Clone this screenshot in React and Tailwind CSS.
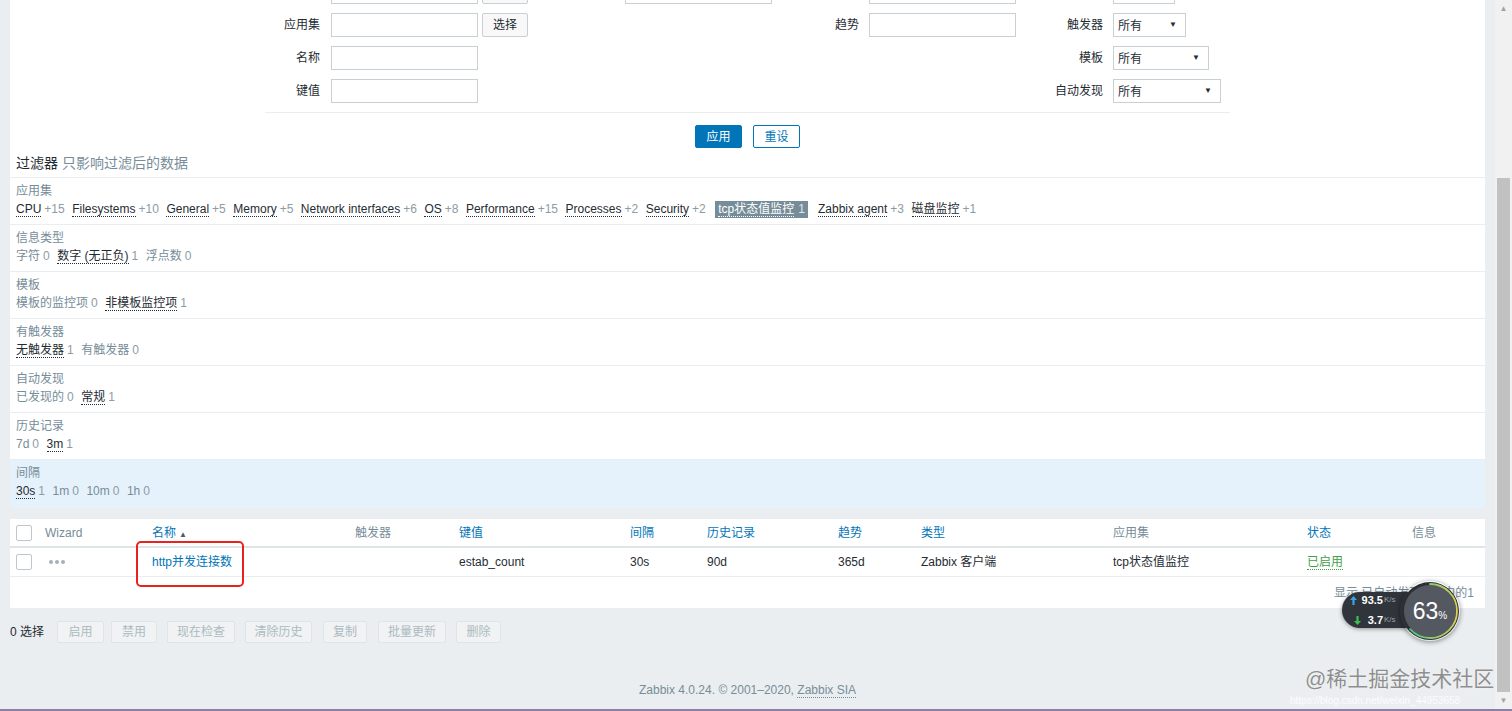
import React from "react";

const FONT = "font-['Liberation_Sans','Noto_Sans_CJK_SC',sans-serif]";

const Input = ({ w = "w-[147px]" }) => (
  <div className={"h-[24px] border border-[#c9cfd2] bg-white " + w} />
);

const Select = ({ w, empty }) => (
  <div className={"h-[24px] border border-[#c9cfd2] bg-white flex items-center justify-between pl-[4px] pr-[8px] " + w}>
    {!empty && <span className="pt-[2px]">所有</span>}
    {!empty && <span className="text-[8px]">▼</span>}
  </div>
);

const PickBtn = ({ empty }) => (
  <div className="h-[24px] w-[46px] border border-[#c9cfd2] rounded-[2px] bg-[#f8f8f8] flex items-center justify-center">{empty ? null : "选择"}</div>
);

// one filter form row, 4 label/field columns
const FormRow = ({ c1, f1, c2, f2, c3, f3, c4, f4 }) => (
  <div className="flex items-center h-[33px]">
    <div className="w-[55px] text-right">{c1}</div>
    <div className="w-[240px] pl-[11px] flex gap-[4px]">{f1}</div>
    <div className="w-[55px] text-right">{c2}</div>
    <div className="w-[185px] pl-[10px] flex">{f2}</div>
    <div className="w-[59px] text-right">{c3}</div>
    <div className="w-[191px] pl-[10px] flex">{f3}</div>
    <div className="w-[53px] text-right whitespace-nowrap">{c4}</div>
    <div className="w-[127px] pl-[10px] flex">{f4}</div>
  </div>
);

const Tag = ({ name, count, link, active }) => {
  if (active) {
    return (
      <span className="bg-[#768d99] text-white px-[3px] leading-[17px] mr-[10px] ml-[2px]">
        <span className="border-b border-dotted border-white">{name}</span>
        <span className="ml-[4px] text-[#dfe6ea]">{count}</span>
      </span>
    );
  }
  return (
    <span className="mr-[7.5px]">
      <span className={link ? "border-b border-dotted border-[#1f2c33] text-[#1f2c33]" : "text-[#768d99]"}>{name}</span>
      <span className="ml-[3px] text-[#8d9ca4]">{count}</span>
    </span>
  );
};

const subfilters = [
  {
    label: "应用集",
    tags: [
      ["CPU", "+15", 1], ["Filesystems", "+10", 1], ["General", "+5", 1], ["Memory", "+5", 1],
      ["Network interfaces", "+6", 1], ["OS", "+8", 1], ["Performance", "+15", 1], ["Processes", "+2", 1],
      ["Security", "+2", 1], ["tcp状态值监控", "1", 1, 1], ["Zabbix agent", "+3", 1], ["磁盘监控", "+1", 1],
    ],
  },
  { label: "信息类型", tags: [["字符", "0"], ["数字 (无正负)", "1", 1], ["浮点数", "0"]] },
  { label: "模板", tags: [["模板的监控项", "0"], ["非模板监控项", "1", 1]] },
  { label: "有触发器", tags: [["无触发器", "1", 1], ["有触发器", "0"]] },
  { label: "自动发现", tags: [["已发现的", "0"], ["常规", "1", 1]] },
  { label: "历史记录", tags: [["7d", "0"], ["3m", "1", 1]] },
  { label: "间隔", tags: [["30s", "1", 1], ["1m", "0"], ["10m", "0"], ["1h", "0"]], hl: true },
];

const COLS = "grid grid-cols-[35px_107px_203px_104px_171px_77px_131px_83px_192px_194px_105px_73px] items-center";

const Checkbox = () => <div className="w-[16px] h-[16px] border border-[#bfc7cc] rounded-[2px] bg-white" />;

const actions = [
  ["启用", "w-[47px] ml-[13px]"], ["禁用", "w-[46px] ml-[7px]"], ["现在检查", "w-[68px] ml-[10px]"],
  ["清除历史", "w-[67px] ml-[10px]"], ["复制", "w-[44px] ml-[11px]"], ["批量更新", "w-[68px] ml-[11px]"],
  ["删除", "w-[45px] ml-[10px]"],
];

const Arrow = ({ up, color }) => (
  <svg width="7" height="9" viewBox="0 0 7 9" className="shrink-0">
    {up ? (
      <path d="M3.5 0 L7 4 H4.6 V9 H2.4 V4 H0 Z" fill={color} />
    ) : (
      <path d="M3.5 9 L7 5 H4.6 V0 H2.4 V5 H0 Z" fill={color} />
    )}
  </svg>
);

const SpeedWidget = () => (
  <div className="absolute left-[1342px] top-[580px] w-[120px] h-[62px]">
    <div className="absolute left-0 top-[12px] w-[92px] h-[36px] rounded-full bg-[#30343b] shadow-[0_1px_4px_rgba(0,0,0,0.4)] flex flex-col justify-center gap-[6px] pl-[8px] text-white">
      <div className="flex items-center leading-[14px]">
        <Arrow up color="#3aa3e3" />
        <span className="w-[26px] text-right text-[11px] font-bold">93.5</span>
        <span className="text-[8px] text-[#9aa2aa] ml-[1px]">K/s</span>
      </div>
      <div className="flex items-center leading-[14px]">
        <span className="w-[4px]" />
        <Arrow color="#3bbf4f" />
        <span className="w-[22px] text-right text-[11px] font-bold">3.7</span>
        <span className="text-[8px] text-[#9aa2aa] ml-[1px]">K/s</span>
      </div>
    </div>
    <div className="absolute left-[58px] top-[1px] w-[60px] h-[60px] rounded-full shadow-[0_1px_5px_rgba(0,0,0,0.45)]">
      <svg width="60" height="60" viewBox="0 0 60 60" className="absolute inset-0">
        <defs>
          <linearGradient id="ring" x1="0" y1="0" x2="0" y2="1">
            <stop offset="0" stopColor="#3cbf8a" />
            <stop offset="1" stopColor="#d9d257" />
          </linearGradient>
        </defs>
        <circle cx="30" cy="30" r="29" fill="#2c3036" />
        <circle cx="30" cy="30" r="26" fill="#545961" />
        <circle cx="30" cy="30" r="27" fill="none" stroke="url(#ring)" strokeWidth="1.8" strokeDasharray={`${2 * Math.PI * 27 * 0.63} ${2 * Math.PI * 27}`} transform="rotate(-90 30 30)" strokeLinecap="round" />
      </svg>
      <div className="absolute inset-0 flex items-center justify-center text-white">
        <span className="text-[23px] leading-none font-light">63</span>
        <span className="text-[10px] mt-[8px]">%</span>
      </div>
    </div>
  </div>
);

export default function App() {
  return (
    <div className={FONT + " w-[1512px] h-[711px] overflow-hidden bg-[#ebeef0] text-[12px] text-[#1f2c33] flex flex-col relative"}>
      <div className="flex h-[709px]">
        <div className="w-[1495px] px-[10px] flex flex-col">
          {/* filter panel */}
          <div className="bg-white">
            <div className="ml-[255px] w-[965px] -mt-[25px] pb-[5px] border-b border-[#ebeef0]">
              <FormRow
                c1="" f1={<><Input /><PickBtn empty /></>}
                c2="" f2={<Input />}
                c3="" f3={<Input />}
                c4="" f4={<Select w="w-[62px]" empty />}
              />
              <FormRow
                c1="应用集" f1={<><Input /><PickBtn /></>}
                c2="" f2={null}
                c3="趋势" f3={<Input />}
                c4="触发器" f4={<Select w="w-[73px]" />}
              />
              <FormRow c1="名称" f1={<Input />} c4="模板" f4={<Select w="w-[96px]" />} />
              <FormRow c1="键值" f1={<Input />} c4="自动发现" f4={<Select w="w-[108px]" />} />
            </div>
            <div className="flex justify-center gap-[11px] mt-[12px]">
              <div className="h-[23px] w-[47px] rounded-[2px] bg-[#0275b8] border border-[#0275b8] text-white flex items-center justify-center">应用</div>
              <div className="h-[23px] w-[47px] rounded-[2px] bg-white border border-[#0275b8] text-[#0275b8] flex items-center justify-center">重设</div>
            </div>
            <div className="h-[29px] flex items-center pl-[6px] pt-[1px] text-[14px]">
              过滤器<span className="text-[#768d99] ml-[4px]">只影响过滤后的数据</span>
            </div>
            <div className="border-t border-[#ebeef0]">
              {subfilters.map((s) => (
                <div key={s.label} className={s.hl ? "bg-[#e6f2fb] px-[6px] pt-[6px] pb-[8px]" : "border-b border-[#ebeef0] px-[6px] pt-[6px] pb-[6px]"}>
                  <div className="leading-[14px] text-[#768d99]">{s.label}</div>
                  <div className="mt-[2px] h-[18px] flex items-center">
                    {s.tags.map(([n, c, l, a]) => (
                      <Tag key={n} name={n} count={c} link={l} active={a} />
                    ))}
                  </div>
                </div>
              ))}
            </div>
          </div>

          {/* item list */}
          <div className="bg-white mt-[11px] relative">
            <div className={COLS + " h-[29px] border-b-2 border-[#dfe4e7]"}>
              <div className="pl-[6px]"><Checkbox /></div>
              <div className="text-[#768d99]">Wizard</div>
              <div className="text-[#0275b8]">名称<span className="ml-[3px] text-[8px] text-[#4f5b62]">▲</span></div>
              <div className="text-[#768d99]">触发器</div>
              <div className="text-[#0275b8]">键值</div>
              <div className="text-[#0275b8]">间隔</div>
              <div className="text-[#0275b8]">历史记录</div>
              <div className="text-[#0275b8]">趋势</div>
              <div className="text-[#0275b8]">类型</div>
              <div className="text-[#768d99]">应用集</div>
              <div className="text-[#0275b8]">状态</div>
              <div className="text-[#768d99]">信息</div>
            </div>
            <div className={COLS + " h-[29px] border-b border-[#ebeef0]"}>
              <div className="pl-[6px]"><Checkbox /></div>
              <div className="flex gap-[2px] pl-[4px]">
                <span className="w-[4px] h-[4px] rounded-full bg-[#a5b1b8]" />
                <span className="w-[4px] h-[4px] rounded-full bg-[#a5b1b8]" />
                <span className="w-[4px] h-[4px] rounded-full bg-[#a5b1b8]" />
              </div>
              <div className="text-[#0275b8]">http并发连接数</div>
              <div />
              <div>estab_count</div>
              <div>30s</div>
              <div>90d</div>
              <div>365d</div>
              <div>Zabbix 客户端</div>
              <div>tcp状态值监控</div>
              <div><span className="text-[#429e47] border-b border-dotted border-[#429e47]">已启用</span></div>
              <div />
            </div>
            <div className="h-[31px] flex items-center justify-end pr-[11px] text-[#768d99]">显示 已自动发现的 1中的1</div>
            <div className="absolute left-[126px] top-[22px] w-[108px] h-[46px] border-2 border-[#e8231e] rounded-[5px]" />
          </div>

          {/* mass actions */}
          <div className="mt-[13px] h-[22px] flex items-center">
            <span>0 选择</span>
            {actions.map(([t, w]) => (
              <div key={t} className={"h-[22px] rounded-[2px] border border-[#dfe4e7] bg-[#f0f2f3] text-[#acbbc2] flex items-center justify-center " + w}>{t}</div>
            ))}
          </div>

          <div className="mt-[40px] text-center text-[#768d99] leading-[14px]">
            Zabbix 4.0.24. © 2001–2020, <span className="border-b border-dotted border-[#768d99]">Zabbix SIA</span>
          </div>
        </div>

        {/* scrollbar */}
        <div className="w-[17px] bg-[#f1f1f1] flex flex-col items-center">
          <div className="h-[17px] flex items-center justify-center text-[8px] text-[#a3a3a3]">▲</div>
          <div className="mt-[161px] w-[13px] h-[514px] bg-[#c1c1c1]" />
          <div className="h-[17px] flex items-center justify-center text-[8px] text-[#a3a3a3]">▼</div>
        </div>
      </div>
      <div className="h-[2px] bg-[#8c7fa8]" />

      <SpeedWidget />

      <div className="absolute left-[1305px] top-[668px] text-[21px] leading-[22px] text-[#8e8e8e] [text-shadow:0_0_1px_#fff]">@稀土掘金技术社区</div>
      <div className="absolute left-[1290px] top-[695px] text-[10px] leading-[12px] text-white/80">https://blog.csdn.net/weixin_44953658</div>
    </div>
  );
}
